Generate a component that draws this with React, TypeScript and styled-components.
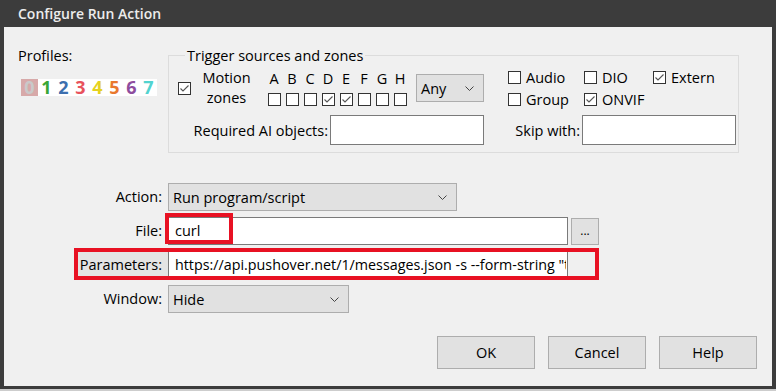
import React from 'react';
import styled, { createGlobalStyle } from 'styled-components';

const Global = createGlobalStyle`
  html, body { margin: 0; padding: 0; background: #cdcdcd; }
  body {
    font-family: "Open Sans", "Noto Sans", sans-serif;
    font-size: 14.5px;
    color: #000;
  }
  * { box-sizing: border-box; }
`;

const Frame = styled.div`
  width: 776px;
  height: 389px;
  background: #3c3c3c;
  padding: 0 4px 3px 4px;
  display: flex;
  flex-direction: column;
`;

const TitleBar = styled.div`
  height: 27px;
  display: flex;
  align-items: center;
  padding-left: 14px;
  color: #ececec;
  font-weight: 600;
  font-size: 14px;
`;

const Client = styled.div`
  flex: 1;
  background: #f0f0f0;
  display: flex;
  flex-direction: column;
`;

const TopSection = styled.div`
  display: flex;
  padding: 19px 0 0 14px;
`;

const ProfilesCol = styled.div`
  width: 150px;
  display: flex;
  flex-direction: column;
`;

const Label = styled.div`
  line-height: 19px;
  white-space: nowrap;
`;

const DigitStrip = styled.div`
  display: flex;
  margin: 14px 0 0 3px;
  background: #fff;
  width: max-content;
`;

const Digit = styled.span<{ $color: string; $bg?: string }>`
  width: 17px;
  height: 17px;
  line-height: 17px;
  text-align: center;
  font-weight: 700;
  font-size: 18px;
  color: ${p => p.$color};
  background: ${p => p.$bg || 'transparent'};
`;

const GroupBox = styled.fieldset`
  width: 571px;
  margin: 0;
  border: 1px solid #dcdcdc;
  padding: 6px 1px 7px 9px;
  display: grid;
  grid-template-columns: 306px 228px;
  column-gap: 24px;
  row-gap: 6px;
`;

const GroupTitle = styled.legend`
  margin-left: 7px;
  padding: 0 2px;
  line-height: 19px;
`;

const MotionRow = styled.div`
  display: flex;
  align-items: flex-start;
  height: 35px;
`;

const Box = styled.span<{ $top?: number }>`
  width: 13px;
  height: 13px;
  border: 1px solid #333;
  background: #fff;
  display: inline-flex;
  align-items: center;
  justify-content: center;
  flex: none;
  margin-top: ${p => p.$top ?? 0}px;
`;

const MotionText = styled.div`
  width: 59px;
  margin: -3px 0 0 6px;
  line-height: 20px;
  text-align: center;
`;

const ZoneGrid = styled.div`
  display: grid;
  grid-template-columns: repeat(8, 18px);
  grid-template-rows: 16px 13px;
  row-gap: 6px;
  margin-left: 9px;
  justify-items: center;
`;

const ZoneLetter = styled.span`
  line-height: 16px;
`;

const Select = styled.div<{ $w: number; $h?: number; $top?: number }>`
  width: ${p => p.$w}px;
  height: ${p => p.$h ?? 28}px;
  margin-top: ${p => p.$top ?? 0}px;
  margin-left: ${p => (p.$top ? 7 : 0)}px;
  background: #e1e1e1;
  border: 1px solid #adadad;
  display: flex;
  align-items: center;
  justify-content: space-between;
  padding: 0 9px 0 4px;
  flex: none;
`;

const SourceGrid = styled.div`
  display: grid;
  grid-template-columns: 76px 69px 1fr;
  grid-auto-rows: 20px;
  row-gap: 2px;
  margin-top: -4px;
`;

const CheckItem = styled.label`
  display: flex;
  align-items: center;
  gap: 5px;
  white-space: nowrap;
`;

const FieldRow = styled.div`
  display: flex;
  justify-content: flex-end;
  align-items: center;
  gap: 2px;
`;

const TextBox = styled.div<{ $w: number }>`
  position: relative;
  width: ${p => p.$w}px;
  height: 28px;
  background: #fff;
  border: 1px solid #7a7a7a;
  padding: 0 1px 0 6px;
  line-height: 26px;
  white-space: nowrap;
  overflow: visible;
  flex: none;
`;

const Clip = styled.div`
  overflow: hidden;
  white-space: nowrap;
  font-size: 14.3px;
`;

const SmallInput = styled.div`
  width: 154px;
  height: 30px;
  background: #fff;
  border: 1px solid #7a7a7a;
`;

const Form = styled.div`
  display: grid;
  grid-template-columns: 90px 1fr;
  row-gap: 6px;
  padding-left: 74px;
  margin-top: 30px;
`;

const FormLabel = styled.div<{ $shade?: boolean }>`
  position: relative;
  text-align: right;
  padding-right: 6px;
  line-height: 28px;
  height: 28px;
  white-space: nowrap;
  background: ${p => (p.$shade ? '#e4e4e4' : 'transparent')};
`;

const FormCell = styled.div`
  display: flex;
  align-items: center;
  gap: 3px;
`;

const SmallButton = styled.div`
  width: 28px;
  height: 27px;
  background: #e1e1e1;
  border: 1px solid #adadad;
  display: flex;
  align-items: center;
  justify-content: center;
  font-size: 12px;
  padding-bottom: 2px;
`;

const Highlight = styled.div<{ $l: number; $t: number; $w: number; $h: number; $b: number }>`
  position: absolute;
  left: ${p => p.$l}px;
  top: ${p => p.$t}px;
  width: ${p => p.$w}px;
  height: ${p => p.$h}px;
  border: ${p => p.$b}px solid #e81123;
  pointer-events: none;
  z-index: 2;
`;

const ButtonRow = styled.div`
  display: flex;
  justify-content: flex-end;
  gap: 13px;
  padding-right: 15px;
  margin-top: 23px;
`;

const Button = styled.div`
  width: 98px;
  height: 33px;
  background: #e1e1e1;
  border: 1px solid #adadad;
  display: flex;
  align-items: center;
  justify-content: center;
`;

const Check = () => (
  <svg width="11" height="11" viewBox="0 0 11 11">
    <polyline points="1.5,5.5 4,8 9.5,2.5" fill="none" stroke="#555" strokeWidth="1.1" />
  </svg>
);

const Chevron = () => (
  <svg width="9" height="5" viewBox="0 0 9 5">
    <polyline points="0.5,0.5 4.5,4.5 8.5,0.5" fill="none" stroke="#444" strokeWidth="1" />
  </svg>
);

const CheckBox = ({ checked, top }: { checked?: boolean; top?: number }) => (
  <Box $top={top}>{checked && <Check />}</Box>
);

const digits: { d: string; c: string; bg?: string }[] = [
  { d: '0', c: '#c9c9c9', bg: '#d7a9a9' },
  { d: '1', c: '#3aa635' },
  { d: '2', c: '#3d6fae' },
  { d: '3', c: '#e8525c' },
  { d: '4', c: '#e6d21e' },
  { d: '5', c: '#e9782e' },
  { d: '6', c: '#8e4d9e' },
  { d: '7', c: '#52d3cf' },
];

const zones = ['A', 'B', 'C', 'D', 'E', 'F', 'G', 'H'];
const zoneChecked = [false, false, false, true, true, false, false, false];

export default function App() {
  return (
    <>
      <Global />
      <Frame>
        <TitleBar>Configure Run Action</TitleBar>
        <Client>
          <TopSection>
            <ProfilesCol>
              <Label>Profiles:</Label>
              <DigitStrip>
                {digits.map(x => (
                  <Digit key={x.d} $color={x.c} $bg={x.bg}>{x.d}</Digit>
                ))}
              </DigitStrip>
            </ProfilesCol>
            <GroupBox>
              <GroupTitle>Trigger sources and zones</GroupTitle>
              <MotionRow>
                <CheckBox checked top={11} />
                <MotionText>Motion<br />zones</MotionText>
                <ZoneGrid>
                  {zones.map(z => (
                    <ZoneLetter key={z}>{z}</ZoneLetter>
                  ))}
                  {zones.map((z, i) => (
                    <CheckBox key={'b' + z} checked={zoneChecked[i]} />
                  ))}
                </ZoneGrid>
                <Select $w={68} $top={3}>
                  <span>Any</span>
                  <Chevron />
                </Select>
              </MotionRow>
              <SourceGrid>
                <CheckItem><CheckBox />Audio</CheckItem>
                <CheckItem><CheckBox />DIO</CheckItem>
                <CheckItem><CheckBox checked />Extern</CheckItem>
                <CheckItem><CheckBox />Group</CheckItem>
                <CheckItem><CheckBox checked />ONVIF</CheckItem>
              </SourceGrid>
              <FieldRow>
                <span>Required AI objects:</span>
                <SmallInput />
              </FieldRow>
              <FieldRow>
                <span>Skip with:</span>
                <SmallInput />
              </FieldRow>
            </GroupBox>
          </TopSection>

          <Form>
            <FormLabel>Action:</FormLabel>
            <FormCell>
              <Select $w={289}>
                <span>Run program/script</span>
                <Chevron />
              </Select>
            </FormCell>

            <FormLabel>File:</FormLabel>
            <FormCell>
              <TextBox $w={400}>
                curl
                <Highlight $l={-4} $t={-5} $w={68} $h={31} $b={4} />
              </TextBox>
              <SmallButton>...</SmallButton>
            </FormCell>

            <FormLabel $shade>
              Parameters:
              <Highlight $l={-4} $t={-3} $w={525} $h={32} $b={4} />
            </FormLabel>
            <FormCell>
              <TextBox $w={400}>
                <Clip>https://api.pushover.net/1/messages.json -s --form-string "token=azGDORePK8gMaC0QOYAMyEEuzJnyUi"</Clip>
              </TextBox>
            </FormCell>

            <FormLabel>Window:</FormLabel>
            <FormCell>
              <Select $w={181}>
                <span>Hide</span>
                <Chevron />
              </Select>
            </FormCell>
          </Form>

          <ButtonRow>
            <Button>OK</Button>
            <Button>Cancel</Button>
            <Button>Help</Button>
          </ButtonRow>
        </Client>
      </Frame>
    </>
  );
}
